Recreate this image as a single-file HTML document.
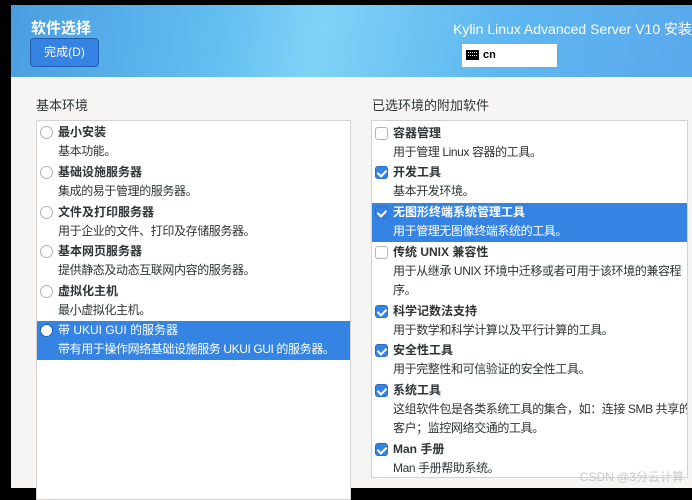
<!DOCTYPE html>
<html><head><meta charset="utf-8"><style>
*{margin:0;padding:0;box-sizing:border-box}
body{width:692px;height:488px;overflow:hidden;background:#000;font-family:"Liberation Sans","Noto Sans CJK SC",sans-serif;font-size:12px;color:#2e3436;position:relative}
.hdr{position:absolute;left:11px;top:5px;right:0;height:72px;background:linear-gradient(100deg,#4a9ee0 0%,#62bdf0 30%,#7fd3f6 45%,#5fb8f0 70%,#5aa8ec 100%)}
.t{position:absolute;left:20px;top:12px;color:#fff;font-size:15px;font-weight:bold}
.btn{position:absolute;left:19px;top:33px;width:69px;height:29px;background:#3584e4;border:1px solid #1f5fae;border-radius:4px;color:#fff;text-align:center;line-height:27px;font-size:12px}
.r{position:absolute;right:0;top:14px;color:#fff;font-size:14px;white-space:nowrap}
.kb{position:absolute;left:451px;top:39px;width:95px;height:23px;background:#fff;font-size:11px;font-weight:bold;color:#000;padding:5px 0 0 21px}
.kb i{position:absolute;left:4px;top:6px;width:13px;height:10px;background:#000;border:1px solid #000}
.kb i:after{content:"";position:absolute;left:1px;top:1px;width:9px;height:2px;border-top:1px dotted #fff;border-bottom:1px dotted #fff}
.main{position:absolute;left:11px;top:77px;right:0;bottom:0;background:#f6f5f4}
.h{position:absolute;top:18px;font-size:13px;color:#2e3436}
.box{position:absolute;background:#fff;border:1px solid #d5d2cf;overflow:hidden}
.it{position:absolute;left:0;right:0;padding-left:21px;white-space:nowrap}
.it b{display:block;font-weight:bold;height:19px;line-height:19px}
.it span{display:block;line-height:19px;letter-spacing:-0.4px}
.sel{background:#3584e4;color:#fff}
.rad{position:absolute;left:3px;top:3px;width:13px;height:13px;border-radius:50%;border:1px solid #b6b3b0;background:#fff}
.cb{position:absolute;left:3px;top:3px;width:13px;height:13px;border-radius:3px;border:1px solid #b6b3b0;background:#fff}
.cb.on{background:#3584e4;border-color:#2a6fc2}
.cb.on:after{content:"";position:absolute;left:3px;top:1px;width:4px;height:7px;border-right:2px solid #fff;border-bottom:2px solid #fff;transform:rotate(45deg)}
.wm{position:absolute;right:8px;bottom:3px;color:#c8c8c8;font-size:12px}
</style></head><body>
<div class="hdr">
<div class="t">软件选择</div>
<div class="btn">完成(D)</div>
<div class="r">Kylin Linux Advanced Server V10 安装</div>
<div class="kb"><i></i>cn</div>
</div>
<div class="main">
<div class="h" style="left:25px">基本环境</div>
<div class="h" style="left:361px">已选环境的附加软件</div>
<div class="box" style="left:25px;top:43px;width:315px;height:380px">
<div class="it" style="top:2px"><div class="rad"></div><b>最小安装</b><span>基本功能。</span></div>
<div class="it" style="top:42px"><div class="rad"></div><b>基础设施服务器</b><span>集成的易于管理的服务器。</span></div>
<div class="it" style="top:82px"><div class="rad"></div><b>文件及打印服务器</b><span>用于企业的文件、打印及存储服务器。</span></div>
<div class="it" style="top:121px"><div class="rad"></div><b>基本网页服务器</b><span>提供静态及动态互联网内容的服务器。</span></div>
<div class="it" style="top:161px"><div class="rad"></div><b>虚拟化主机</b><span>最小虚拟化主机。</span></div>
<div class="it sel" style="top:200px;height:39px"><div class="rad" style="border-color:#1f5fae;background:#fff;box-shadow:inset 0 0 0 3px #fff"></div><b style="font-weight:normal">带 UKUI GUI 的服务器</b><span>带有用于操作网络基础设施服务 UKUI GUI 的服务器。</span></div>
</div>
<div class="box" style="left:360px;top:43px;width:317px;height:358px">
<div class="it" style="top:3px"><div class="cb"></div><b>容器管理</b><span>用于管理 Linux 容器的工具。</span></div>
<div class="it" style="top:42px"><div class="cb on"></div><b>开发工具</b><span>基本开发环境。</span></div>
<div class="it sel" style="top:82px;height:39px"><div class="cb on"></div><b>无图形终端系统管理工具</b><span>用于管理无图像终端系统的工具。</span></div>
<div class="it" style="top:122px"><div class="cb"></div><b>传统 UNIX 兼容性</b><span>用于从继承 UNIX 环境中迁移或者可用于该环境的兼容程<br>序。</span></div>
<div class="it" style="top:181px"><div class="cb on"></div><b>科学记数法支持</b><span>用于数学和科学计算以及平行计算的工具。</span></div>
<div class="it" style="top:220px"><div class="cb on"></div><b>安全性工具</b><span>用于完整性和可信验证的安全性工具。</span></div>
<div class="it" style="top:260px"><div class="cb on"></div><b>系统工具</b><span>这组软件包是各类系统工具的集合，如：连接 SMB 共享的<br>客户；监控网络交通的工具。</span></div>
<div class="it" style="top:319px"><div class="cb on"></div><b>Man 手册</b><span>Man 手册帮助系统。</span></div>
</div>
<div class="wm">CSDN @3分云计算</div>
</div>
</body></html>
